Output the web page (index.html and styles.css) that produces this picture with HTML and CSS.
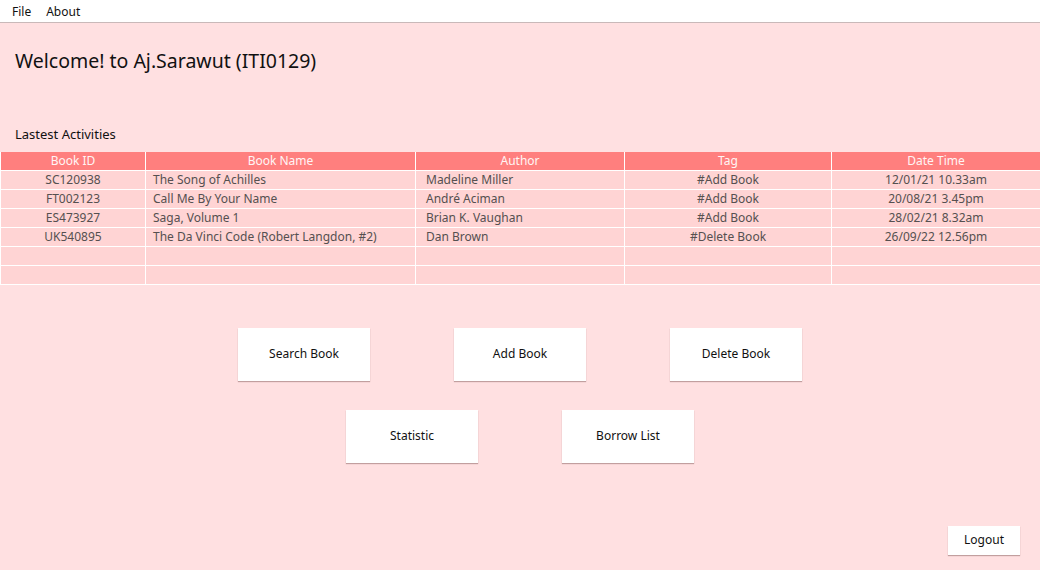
FILE: index.html
```html
<!DOCTYPE html>
<html>
<head>
<meta charset="utf-8">
<link rel="stylesheet" href="styles.css">
</head>
<body>
<div class="app">
  <nav class="menubar">
    <span class="menu-item">File</span>
    <span class="menu-item">About</span>
  </nav>
  <main class="content">
    <h1 class="welcome">Welcome! to Aj.Sarawut (ITI0129)</h1>
    <h2 class="section-title">Lastest Activities</h2>
    <table class="activity">
      <colgroup>
        <col class="c1"><col class="c2"><col class="c3"><col class="c4"><col class="c5">
      </colgroup>
      <thead>
        <tr><th>Book ID</th><th>Book Name</th><th>Author</th><th>Tag</th><th>Date Time</th></tr>
      </thead>
      <tbody>
        <tr><td class="center">SC120938</td><td>The Song of Achilles</td><td class="author">Madeline Miller</td><td class="center">#Add Book</td><td class="center">12/01/21 10.33am</td></tr>
        <tr><td class="center">FT002123</td><td>Call Me By Your Name</td><td class="author">André Aciman</td><td class="center">#Add Book</td><td class="center">20/08/21 3.45pm</td></tr>
        <tr><td class="center">ES473927</td><td>Saga, Volume 1</td><td class="author">Brian K. Vaughan</td><td class="center">#Add Book</td><td class="center">28/02/21 8.32am</td></tr>
        <tr><td class="center">UK540895</td><td>The Da Vinci Code (Robert Langdon, #2)</td><td class="author">Dan Brown</td><td class="center">#Delete Book</td><td class="center">26/09/22 12.56pm</td></tr>
        <tr><td></td><td></td><td></td><td></td><td></td></tr>
        <tr><td></td><td></td><td></td><td></td><td></td></tr>
      </tbody>
    </table>
    <div class="actions">
      <div class="action-row">
        <button class="btn">Search Book</button>
        <button class="btn">Add Book</button>
        <button class="btn">Delete Book</button>
      </div>
      <div class="action-row">
        <button class="btn">Statistic</button>
        <button class="btn">Borrow List</button>
      </div>
    </div>
    <div class="footer">
      <button class="btn-logout">Logout</button>
    </div>
  </main>
</div>
</body>
</html>
```

FILE: styles.css
```css
* { box-sizing: border-box; }
html, body { margin: 0; padding: 0; }
body {
  width: 1040px;
  height: 570px;
  overflow: hidden;
  background: #ffe0e1;
  font-family: "Noto Sans", "Open Sans", sans-serif;
  color: #111;
}
.app {
  display: flex;
  flex-direction: column;
  height: 570px;
}
.menubar {
  height: 23px;
  background: #ffffff;
  border-bottom: 1px solid #c9b9b9;
  display: flex;
  align-items: center;
  padding-left: 12px;
  gap: 15px;
  font-size: 12px;
  color: #111;
}
.content {
  flex: 1;
  display: flex;
  flex-direction: column;
}
.welcome {
  margin: 0;
  padding: 24px 0 0 15px;
  font-size: 19.5px;
  font-weight: 400;
  line-height: 28px;
  height: 98px;
  color: #111;
}
.section-title {
  margin: 0;
  padding-left: 15px;
  font-size: 13px;
  font-weight: 400;
  line-height: 26px;
  height: 31px;
  color: #111;
}
.activity {
  width: 1040px;
  border-collapse: collapse;
  table-layout: fixed;
  font-size: 12px;
}
.c1 { width: 145px; }
.c2 { width: 270px; }
.c3 { width: 209px; }
.c4 { width: 207px; }
.c5 { width: 209px; }
.activity th {
  background: #ff7f7e;
  color: #fff5f5;
  font-weight: 400;
  height: 18px;
  padding: 0;
  border-left: 1px solid #ffffff;
  border-right: 1px solid #ffffff;
  border-bottom: 1px solid #ffffff;
  text-align: center;
  line-height: 16px;
}
.activity td {
  background: #ffd4d4;
  color: #555050;
  height: 19px;
  padding: 1px 0 0 7px;
  border: 1px solid #ffffff;
  white-space: nowrap;
  line-height: 16px;
}
.activity td.author { padding-left: 10px; }
.activity td.center { text-align: center; padding: 1px 0 0 0; }
.actions {
  display: flex;
  flex-direction: column;
  align-items: center;
  gap: 29px;
  margin-top: 43px;
}
.action-row {
  display: flex;
  gap: 84px;
}
.btn {
  width: 132px;
  height: 53px;
  background: #ffffff;
  border: none;
  box-shadow: 0 1px 1px rgba(120, 80, 80, 0.45);
  font-family: inherit;
  font-size: 12px;
  color: #111;
  padding: 0 0 2px 0;
}
.footer {
  margin-top: auto;
  display: flex;
  justify-content: flex-end;
  padding: 0 20px 15px 0;
}
.btn-logout {
  width: 72px;
  height: 29px;
  background: #ffffff;
  border: none;
  box-shadow: 0 1px 1px rgba(120, 80, 80, 0.45);
  font-family: inherit;
  font-size: 12px;
  color: #111;
  padding: 0 0 2px 0;
}
```
